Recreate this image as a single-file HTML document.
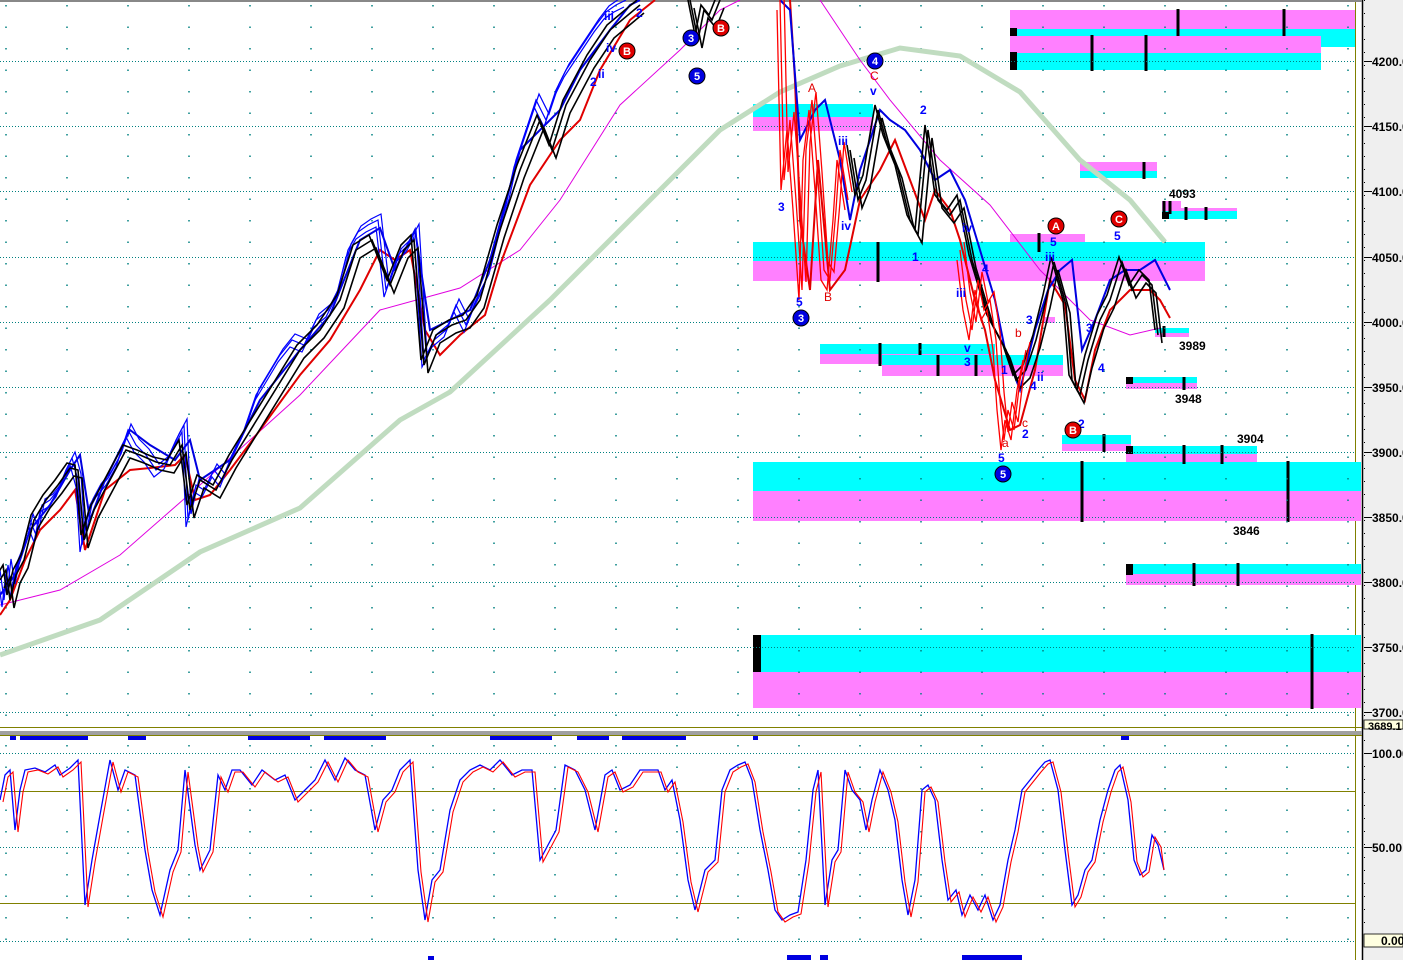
<!DOCTYPE html>
<html><head><meta charset="utf-8"><style>
html,body{margin:0;padding:0;background:#fff;}
svg{display:block;font-family:"Liberation Sans",Arial,sans-serif;}
</style></head><body>
<svg width="1403" height="960" viewBox="0 0 1403 960" xmlns="http://www.w3.org/2000/svg">
<rect width="1403" height="960" fill="#fff"/>
<rect x="1362" y="0" width="41" height="960" fill="#efefef"/>
<line x1="1362.5" y1="0" x2="1362.5" y2="960" stroke="#000" stroke-width="1.5"/>
<line x1="1355.5" y1="0" x2="1355.5" y2="960" stroke="#808000" stroke-width="1"/>
<line x1="0" y1="1" x2="1362" y2="1" stroke="#888" stroke-width="2"/>

<g>
<rect x="1010" y="10" width="345" height="19" fill="#ff80ff"/>
<rect x="1010" y="29" width="345" height="18" fill="#00ffff"/>
<rect x="1010" y="36" width="311" height="17" fill="#ff80ff"/>
<rect x="1010" y="53" width="311" height="17" fill="#00ffff"/>
<rect x="1010" y="28" width="7" height="8" fill="#000"/>
<rect x="1010" y="52" width="7" height="18" fill="#000"/>
<rect x="1080" y="162" width="77" height="9" fill="#ff80ff"/>
<rect x="1080" y="171" width="77" height="7" fill="#00ffff"/>
<rect x="1162" y="201" width="19" height="10" fill="#ff80ff"/>
<rect x="1162" y="208" width="75" height="6" fill="#ff80ff"/>
<rect x="1162" y="211" width="75" height="8" fill="#00ffff"/>
<rect x="1162" y="212" width="7" height="7" fill="#000"/>
<rect x="753" y="104" width="120" height="14" fill="#00ffff"/>
<rect x="753" y="117" width="120" height="14" fill="#ff80ff"/>
<rect x="1010" y="234" width="75" height="9" fill="#ff80ff"/>
<rect x="753" y="242" width="452" height="19" fill="#00ffff"/>
<rect x="753" y="261" width="452" height="20" fill="#ff80ff"/>
<rect x="820" y="344" width="175" height="11" fill="#00ffff"/>
<rect x="820" y="354" width="175" height="10" fill="#ff80ff"/>
<rect x="882" y="355" width="181" height="11" fill="#00ffff"/>
<rect x="882" y="365" width="181" height="11" fill="#ff80ff"/>
<rect x="1043" y="317" width="12" height="6" fill="#ff80ff"/>
<rect x="1155" y="328" width="34" height="5" fill="#00ffff"/>
<rect x="1155" y="333" width="34" height="4" fill="#ff80ff"/>
<rect x="1126" y="377" width="71" height="7" fill="#00ffff"/>
<rect x="1126" y="383" width="71" height="6" fill="#ff80ff"/>
<rect x="1126" y="377" width="7" height="7" fill="#000"/>
<rect x="1062" y="435" width="69" height="10" fill="#00ffff"/>
<rect x="1062" y="444" width="69" height="7" fill="#ff80ff"/>
<rect x="1126" y="446" width="131" height="8" fill="#00ffff"/>
<rect x="1126" y="454" width="131" height="9" fill="#ff80ff"/>
<rect x="1126" y="446" width="7" height="8" fill="#000"/>
<rect x="753" y="462" width="608" height="29" fill="#00ffff"/>
<rect x="753" y="491" width="608" height="30" fill="#ff80ff"/>
<rect x="1126" y="564" width="235" height="11" fill="#00ffff"/>
<rect x="1126" y="574" width="235" height="11" fill="#ff80ff"/>
<rect x="1126" y="564" width="7" height="11" fill="#000"/>
<rect x="753" y="635" width="608" height="37" fill="#00ffff"/>
<rect x="753" y="672" width="608" height="36" fill="#ff80ff"/>
<rect x="753" y="635" width="8" height="37" fill="#000"/>
</g>
<g stroke="#000" stroke-width="3">
<line x1="1178" y1="9" x2="1178" y2="36"/><line x1="1284" y1="9" x2="1284" y2="36"/>
<line x1="1092" y1="35" x2="1092" y2="71"/><line x1="1146" y1="35" x2="1146" y2="71"/>
<line x1="1144" y1="162" x2="1144" y2="179"/>
<line x1="1186" y1="207" x2="1186" y2="220"/><line x1="1206" y1="207" x2="1206" y2="220"/>
<line x1="1164" y1="201" x2="1164" y2="214"/><line x1="1170" y1="201" x2="1170" y2="214"/>
<line x1="878" y1="242" x2="878" y2="282"/><line x1="1039" y1="233" x2="1039" y2="252"/>
<line x1="880" y1="343" x2="880" y2="366"/><line x1="920" y1="343" x2="920" y2="355"/>
<line x1="938" y1="355" x2="938" y2="376"/><line x1="976" y1="355" x2="976" y2="376"/>
<line x1="1184" y1="377" x2="1184" y2="390"/><line x1="1104" y1="434" x2="1104" y2="452"/>
<line x1="1184" y1="445" x2="1184" y2="464"/><line x1="1222" y1="445" x2="1222" y2="464"/>
<line x1="1082" y1="461" x2="1082" y2="522"/><line x1="1288" y1="461" x2="1288" y2="522"/>
<line x1="1194" y1="563" x2="1194" y2="586"/><line x1="1238" y1="563" x2="1238" y2="586"/>
<line x1="1312" y1="634" x2="1312" y2="709"/><line x1="1164" y1="326" x2="1164" y2="337"/>
</g>

<g stroke="#008080" stroke-width="1" stroke-dasharray="1 2">
<line x1="0" y1="61.5" x2="1355" y2="61.5"/><line x1="0" y1="126.5" x2="1355" y2="126.5"/>
<line x1="0" y1="191.5" x2="1355" y2="191.5"/><line x1="0" y1="257.5" x2="1355" y2="257.5"/>
<line x1="0" y1="322.5" x2="1355" y2="322.5"/><line x1="0" y1="387.5" x2="1355" y2="387.5"/>
<line x1="0" y1="452.5" x2="1355" y2="452.5"/><line x1="0" y1="517.5" x2="1355" y2="517.5"/>
<line x1="0" y1="582.5" x2="1355" y2="582.5"/><line x1="0" y1="647.5" x2="1355" y2="647.5"/>
<line x1="0" y1="712.5" x2="1355" y2="712.5"/>
<line x1="0" y1="753.5" x2="1355" y2="753.5"/><line x1="0" y1="847.5" x2="1355" y2="847.5"/>
<line x1="0" y1="941.5" x2="1355" y2="941.5"/>
</g>
<g stroke="#008080" stroke-width="1.5" stroke-dasharray="1.5 20">
<path d="M6 5V728M67 5V728M128 5V728M189 5V728M250 5V728M311 5V728M372 5V728M433 5V728M494 5V728M555 5V728M616 5V728M677 5V728M738 5V728M799 5V728M860 5V728M921 5V728M982 5V728M1043 5V728M1104 5V728M1165 5V728M1226 5V728M1287 5V728M1348 5V728"/>
<path d="M6 745V960M67 745V960M128 745V960M189 745V960M250 745V960M311 745V960M372 745V960M433 745V960M494 745V960M555 745V960M616 745V960M677 745V960M738 745V960M799 745V960M860 745V960M921 745V960M982 745V960M1043 745V960M1104 745V960M1165 745V960M1226 745V960M1287 745V960M1348 745V960"/>
</g>
<line x1="0" y1="727.5" x2="1362" y2="727.5" stroke="#808000"/>

<path d="M0 655 L100 620 L200 552 L300 508 L400 420 L450 392 L550 300 L650 200 L720 130 L780 92 L840 66 L900 48 L960 56 L1020 92 L1080 160 L1130 200 L1165 242" fill="none" stroke="#c0dcc0" stroke-width="5"/>
<path d="M0 605 L60 590 L120 555 L200 485 L300 395 L380 310 L460 288 L520 250 L560 200 L620 105 L680 50 L720 10 L740 0 M820 0 L860 60 L890 100 L940 160 L990 205 L1040 270 L1090 320 L1130 335 L1160 328" fill="none" stroke="#e000e0" stroke-width="1"/>
<path d="M0 615 L10 600 L25 560 L40 530 L60 510 L75 490 L85 550 L95 520 L105 490 L130 470 L150 468 L175 465 L185 455 L195 500 L210 495 L230 470 L260 430 L300 375 L330 340 L360 290 L380 250 L395 260 L410 250 L425 330 L440 355 L460 335 L485 315 L500 265 L530 185 L560 140 L580 120 L600 70 L630 20 L655 0 M790 0 L795 80 L800 220 L810 290 L818 160 L830 290 L845 270 L860 200 L880 170 L895 140 L910 180 L925 220 L935 190 L950 210 L960 240 L975 300 L985 330 L995 380 L1010 430 L1020 425 L1035 370 L1050 280 L1065 305 L1075 380 L1085 400 L1095 350 L1110 310 L1130 290 L1150 290 L1160 300 L1170 318" fill="none" stroke="#e00000" stroke-width="2"/>
<path d="M0 595 L15 575 L30 530 L50 505 L70 470 L80 455 L90 520 L105 480 L130 430 L150 445 L175 460 L190 440 L200 480 L230 460 L260 400 L300 350 L330 315 L360 240 L380 228 L395 270 L415 230 L430 330 L450 320 L470 310 L490 260 L520 150 L560 110 L580 70 L610 30 L630 5 L640 0 M780 0 L790 10 L800 140 L815 110 L825 100 L840 160 L850 220 L860 170 L880 110 L890 120 L905 130 L920 150 L935 180 L950 170 L965 200 L980 250 L995 300 L1005 350 L1020 390 L1035 330 L1048 290 L1060 270 L1072 260 L1082 350 L1095 320 L1110 280 L1125 270 L1140 270 L1155 260 L1170 290" fill="none" stroke="#0000e0" stroke-width="2"/>
<path id="bl" d="M0 570 L4 600 L8 565 L12 590 L18 560 L24 545 L30 520 L36 535 L42 505 L50 500 L58 490 L66 470 L72 458 L78 480 L82 545 L90 505 L98 490 L108 478 L118 460 L128 430 L136 445 L146 455 L156 470 L166 462 L176 440 L184 425 L188 520 L196 485 L204 490 L214 470 L222 480 L232 455 L244 430 L256 395 L268 375 L280 355 L292 340 L304 345 L316 320 L328 310 L338 290 L348 250 L358 232 L368 225 L378 220 L386 290 L398 255 L408 245 L416 230 L424 360 L434 340 L446 330 L456 305 L466 325 L476 300 L486 280 L496 240 L506 205 L516 160 L526 130 L536 100 L546 120 L556 90 L566 70 L576 55 L586 40 L596 25 L606 12 L616 5 L626 0" fill="none" stroke="#0000ff" stroke-width="1.2"/>
<use href="#bl" transform="translate(3,-6)"/>
<use href="#bl" transform="translate(-2,7)"/>
<path id="bk" d="M0 580 L6 570 L10 600 L16 575 L24 560 L34 520 L46 500 L58 485 L70 468 L78 470 L84 540 L94 510 L110 480 L126 450 L140 455 L156 462 L170 465 L182 445 L190 510 L200 480 L216 490 L232 460 L300 350 L320 330 L340 300 L356 250 L372 240 L390 285 L404 250 L414 240 L424 365 L436 335 L452 325 L466 320 L480 300 L500 230 L520 170 L540 120 L552 150 L566 105 L590 60 L610 30 L640 5 M690 0 L698 40 L704 10 L712 20 L720 0 M850 150 L858 200 L866 180 L878 110 L886 140 L898 170 L910 220 L918 235 L928 130 L938 200 L950 215 L960 200 L972 260 L990 320 L1006 350 L1016 380 L1026 370 L1036 340 L1046 300 L1054 262 L1066 305 L1072 380 L1080 395 L1088 360 L1100 320 L1110 300 L1122 262 L1132 290 L1142 275 L1152 285 L1158 335" fill="none" stroke="#000" stroke-width="1.6"/>
<use href="#bk" transform="translate(4,8)"/>
<use href="#bk" transform="translate(-3,-5)"/>
<path id="rd" d="M780 0 L784 180 L790 120 L796 200 L802 290 L806 150 L812 100 L818 180 L824 270 L830 280 L836 210 L840 150 L848 200 M960 250 L966 300 L972 330 L978 280 L984 310 L990 300 L996 340 L1000 400 L1004 440 L1008 410 L1014 430 L1020 380 L1026 350" fill="none" stroke="#ff0000" stroke-width="1.3"/>
<use href="#rd" transform="translate(4,-8)"/>
<use href="#rd" transform="translate(-3,10)"/>

<g font-size="12" font-weight="bold" fill="#0000ff">
<text x="604" y="20">iii</text><text x="636" y="17">2</text><text x="606" y="52">iv</text><text x="598" y="78">ii</text><text x="590" y="86">2</text>
<text x="778" y="211">3</text><text x="796" y="306">5</text><text x="838" y="145">iii</text><text x="841" y="230">iv</text><text x="870" y="95">v</text>
<text x="920" y="114">2</text><text x="912" y="261">1</text><text x="962" y="232">iv</text><text x="956" y="297">iii</text><text x="982" y="273">4</text>
<text x="964" y="352">v</text><text x="964" y="366">3</text><text x="998" y="462">5</text><text x="1022" y="438">2</text><text x="1026" y="324">3</text>
<text x="1045" y="261">iii</text><text x="1050" y="246">5</text><text x="1114" y="240">5</text><text x="1086" y="332">3</text><text x="1098" y="372">4</text>
<text x="1078" y="428">2</text><text x="1001" y="374">1</text><text x="1037" y="381">ii</text><text x="1030" y="390">4</text>
</g>
<g font-size="12" fill="#e00000">
<text x="808" y="92">A</text><text x="870" y="80">C</text><text x="824" y="301">B</text><text x="1015" y="337">b</text><text x="1022" y="427">c</text><text x="1002" y="447">a</text>
</g>
<g font-size="12" font-weight="bold" fill="#000">
<text x="1169" y="198">4093</text><text x="1179" y="350">3989</text><text x="1175" y="403">3948</text><text x="1237" y="443">3904</text><text x="1233" y="535">3846</text>
</g>
<g font-size="11" font-weight="bold" text-anchor="middle">
<circle cx="697" cy="76" r="8" fill="#0000e0" stroke="#000"/><text x="697" y="80" fill="#fff">5</text>
<circle cx="691" cy="38" r="8" fill="#0000e0" stroke="#000"/><text x="691" y="42" fill="#fff">3</text>
<circle cx="721" cy="28" r="8" fill="#e00000" stroke="#000"/><text x="721" y="32" fill="#fff">B</text>
<circle cx="627" cy="51" r="8" fill="#e00000" stroke="#000"/><text x="627" y="55" fill="#fff">B</text>
<circle cx="875" cy="61" r="8" fill="#0000e0" stroke="#000"/><text x="875" y="65" fill="#fff">4</text>
<circle cx="801" cy="318" r="8" fill="#0000e0" stroke="#000"/><text x="801" y="322" fill="#fff">3</text>
<circle cx="1003" cy="474" r="8" fill="#0000e0" stroke="#000"/><text x="1003" y="478" fill="#fff">5</text>
<circle cx="1056" cy="226" r="8" fill="#e00000" stroke="#000"/><text x="1056" y="230" fill="#fff">A</text>
<circle cx="1119" cy="219" r="8" fill="#e00000" stroke="#000"/><text x="1119" y="223" fill="#fff">C</text>
<circle cx="1073" cy="430" r="8" fill="#e00000" stroke="#000"/><text x="1073" y="434" fill="#fff">B</text>
</g>

<rect x="0" y="731" width="1362" height="4" fill="#a0a0a0"/>
<line x1="0" y1="735.5" x2="1362" y2="735.5" stroke="#808000"/>
<g fill="#0000e0">
<rect x="10" y="736" width="6" height="4"/><rect x="20" y="736" width="68" height="4"/><rect x="128" y="736" width="18" height="4"/>
<rect x="248" y="736" width="62" height="4"/><rect x="324" y="736" width="62" height="4"/><rect x="490" y="736" width="62" height="4"/>
<rect x="577" y="736" width="32" height="4"/><rect x="622" y="736" width="64" height="4"/><rect x="753" y="736" width="5" height="4"/>
<rect x="1121" y="736" width="8" height="4"/>
<rect x="428" y="956" width="6" height="4"/><rect x="787" y="955" width="24" height="5"/><rect x="820" y="955" width="8" height="5"/><rect x="962" y="955" width="60" height="5"/>
</g>
<line x1="0" y1="791.5" x2="1355" y2="791.5" stroke="#808000"/>
<line x1="0" y1="903.5" x2="1355" y2="903.5" stroke="#808000"/>

<path d="M0 800 L5 775 L10 770 L15 830 L20 790 L25 770 L35 768 L45 772 L55 765 L60 775 L70 768 L78 760 L85 905 L92 860 L100 815 L110 760 L118 790 L125 770 L135 775 L145 850 L152 890 L160 915 L170 870 L178 850 L185 770 L195 845 L200 870 L210 850 L218 775 L225 790 L232 770 L240 770 L252 785 L262 770 L275 780 L285 775 L295 800 L305 790 L315 780 L325 760 L335 780 L345 758 L355 770 L365 775 L375 830 L383 800 L392 790 L400 770 L410 760 L418 870 L425 920 L432 880 L440 870 L450 810 L460 780 L470 770 L480 765 L490 770 L500 760 L512 775 L522 770 L532 770 L540 860 L548 845 L556 830 L565 765 L575 770 L585 790 L595 830 L605 775 L612 770 L620 790 L630 785 L640 770 L650 770 L658 770 L665 790 L672 780 L680 820 L688 880 L695 910 L705 870 L715 860 L722 790 L730 770 L738 765 L745 762 L752 780 L760 830 L768 870 L775 910 L782 920 L790 915 L798 912 L806 860 L813 790 L818 770 L825 905 L832 860 L838 850 L845 770 L852 790 L860 800 L866 830 L872 800 L880 770 L888 790 L895 820 L902 880 L908 915 L915 880 L922 790 L928 785 L935 800 L942 860 L948 900 L956 890 L962 915 L970 895 L978 910 L985 895 L993 920 L1000 905 L1008 860 L1015 830 L1022 790 L1030 780 L1038 770 L1045 762 L1050 760 L1058 790 L1065 850 L1072 905 L1078 895 L1085 870 L1092 860 L1100 820 L1108 790 L1115 770 L1120 765 L1128 800 L1134 860 L1140 875 L1146 870 L1152 835 L1158 845 L1164 870" fill="none" stroke="#0000ff" stroke-width="1.3"/>
<path d="M3 802 L8 777 L13 772 L18 832 L23 792 L28 772 L38 770 L48 774 L58 767 L63 777 L73 770 L81 762 L88 907 L95 862 L103 817 L113 762 L121 792 L128 772 L138 777 L148 852 L155 892 L163 917 L173 872 L181 852 L188 772 L198 847 L203 872 L213 852 L221 777 L228 792 L235 772 L243 772 L255 787 L265 772 L278 782 L288 777 L298 802 L308 792 L318 782 L328 762 L338 782 L348 760 L358 772 L368 777 L378 832 L386 802 L395 792 L403 772 L413 762 L421 872 L428 922 L435 882 L443 872 L453 812 L463 782 L473 772 L483 767 L493 772 L503 762 L515 777 L525 772 L535 772 L543 862 L551 847 L559 832 L568 767 L578 772 L588 792 L598 832 L608 777 L615 772 L623 792 L633 787 L643 772 L653 772 L661 772 L668 792 L675 782 L683 822 L691 882 L698 912 L708 872 L718 862 L725 792 L733 772 L741 767 L748 764 L755 782 L763 832 L771 872 L778 912 L785 922 L793 917 L801 914 L809 862 L816 792 L821 772 L828 907 L835 862 L841 852 L848 772 L855 792 L863 802 L869 832 L875 802 L883 772 L891 792 L898 822 L905 882 L911 917 L918 882 L925 792 L931 787 L938 802 L945 862 L951 902 L959 892 L965 917 L973 897 L981 912 L988 897 L996 922 L1003 907 L1011 862 L1018 832 L1025 792 L1033 782 L1041 772 L1048 764 L1053 762 L1061 792 L1068 852 L1075 907 L1081 897 L1088 872 L1095 862 L1103 822 L1111 792 L1118 772 L1123 767 L1131 802 L1137 862 L1143 877 L1149 872 L1155 837 L1161 847 L1164 870" fill="none" stroke="#ff0000" stroke-width="1.1"/>

<g stroke="#000" stroke-width="1">
<path d="M1364 61.5h8M1364 126.5h8M1364 191.5h8M1364 257.5h8M1364 322.5h8M1364 387.5h8M1364 452.5h8M1364 517.5h8M1364 582.5h8M1364 647.5h8M1364 712.5h8M1364 753.5h8M1364 847.5h8"/>
</g>
<g stroke="#000" stroke-width="1" stroke-dasharray="1 12">
<path d="M1364.5 0V720M1364.5 740V940"/>
</g>
<g font-size="12" font-weight="bold" fill="#000">
<text x="1372" y="66">4200.0</text><text x="1372" y="131">4150.0</text><text x="1372" y="196">4100.0</text><text x="1372" y="262">4050.0</text>
<text x="1372" y="327">4000.0</text><text x="1372" y="392">3950.0</text><text x="1372" y="457">3900.0</text><text x="1372" y="522">3850.0</text>
<text x="1372" y="587">3800.0</text><text x="1372" y="652">3750.0</text><text x="1372" y="717">3700.0</text>
<text x="1372" y="758">100.00</text><text x="1372" y="852">50.00</text>
</g>
<rect x="1364" y="720" width="39" height="9" fill="#ffffe0" stroke="#000" stroke-width="0.8"/>
<text x="1368" y="730" font-size="11" font-weight="bold">3689.1</text>
<rect x="1364" y="934" width="39" height="13" fill="#ffffe0" stroke="#000" stroke-width="0.8"/>
<text x="1381" y="945" font-size="12" font-weight="bold">0.00</text>
</svg>
</body></html>
